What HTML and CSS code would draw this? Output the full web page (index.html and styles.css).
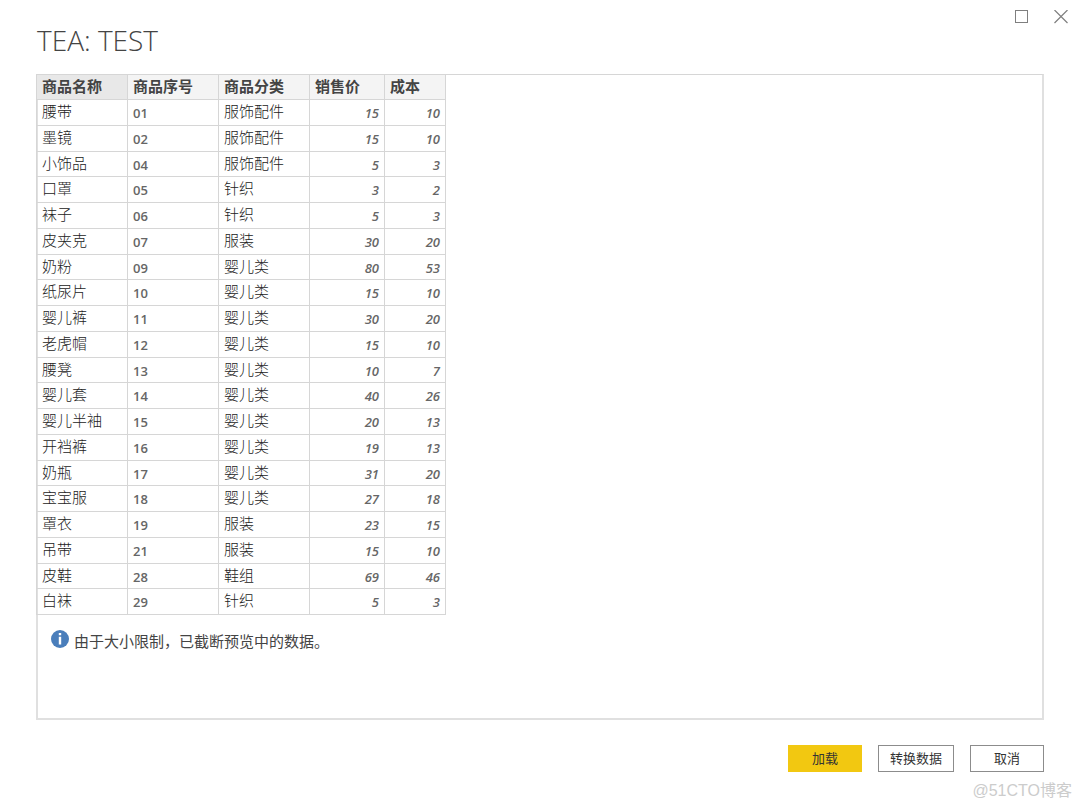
FILE: index.html
```html
<!DOCTYPE html>
<html lang="zh-CN">
<head>
<meta charset="utf-8">
<meta name="viewport" content="width=device-width, initial-scale=1">
<title>TEA: TEST</title>
<link rel="stylesheet" href="styles.css">
</head>
<body>
<main class="dialog">
  <div class="window-controls">
    <button class="window-button" type="button" aria-label="最大化">
      <svg width="14" height="14" viewBox="0 0 14 14" fill="none" stroke="#7f7f7f"><rect x="1.5" y="0.5" width="12" height="12"/></svg>
    </button>
    <button class="window-button" type="button" aria-label="关闭">
      <svg width="14" height="14" viewBox="0 0 14 14" fill="none" stroke="#7f7f7f" stroke-width="1.2"><path d="M0.5 0L13.500 13M13.500 0L0.500 13"/></svg>
    </button>
  </div>
  <h1 class="title">TEA: TEST</h1>
  <section class="preview">
    <table class="data">
      <colgroup><col class="col-name"><col class="col-code"><col class="col-kind"><col class="col-price"><col class="col-cost"></colgroup>
      <thead>
        <tr><th scope="col" class="selected">商品名称</th><th scope="col">商品序号</th><th scope="col">商品分类</th><th scope="col">销售价</th><th scope="col">成本</th></tr>
      </thead>
      <tbody>
        <tr><td>腰带</td><td class="code">01</td><td>服饰配件</td><td class="num">15</td><td class="num">10</td></tr>
        <tr><td>墨镜</td><td class="code">02</td><td>服饰配件</td><td class="num">15</td><td class="num">10</td></tr>
        <tr><td>小饰品</td><td class="code">04</td><td>服饰配件</td><td class="num">5</td><td class="num">3</td></tr>
        <tr><td>口罩</td><td class="code">05</td><td>针织</td><td class="num">3</td><td class="num">2</td></tr>
        <tr><td>袜子</td><td class="code">06</td><td>针织</td><td class="num">5</td><td class="num">3</td></tr>
        <tr><td>皮夹克</td><td class="code">07</td><td>服装</td><td class="num">30</td><td class="num">20</td></tr>
        <tr><td>奶粉</td><td class="code">09</td><td>婴儿类</td><td class="num">80</td><td class="num">53</td></tr>
        <tr><td>纸尿片</td><td class="code">10</td><td>婴儿类</td><td class="num">15</td><td class="num">10</td></tr>
        <tr><td>婴儿裤</td><td class="code">11</td><td>婴儿类</td><td class="num">30</td><td class="num">20</td></tr>
        <tr><td>老虎帽</td><td class="code">12</td><td>婴儿类</td><td class="num">15</td><td class="num">10</td></tr>
        <tr><td>腰凳</td><td class="code">13</td><td>婴儿类</td><td class="num">10</td><td class="num">7</td></tr>
        <tr><td>婴儿套</td><td class="code">14</td><td>婴儿类</td><td class="num">40</td><td class="num">26</td></tr>
        <tr><td>婴儿半袖</td><td class="code">15</td><td>婴儿类</td><td class="num">20</td><td class="num">13</td></tr>
        <tr><td>开裆裤</td><td class="code">16</td><td>婴儿类</td><td class="num">19</td><td class="num">13</td></tr>
        <tr><td>奶瓶</td><td class="code">17</td><td>婴儿类</td><td class="num">31</td><td class="num">20</td></tr>
        <tr><td>宝宝服</td><td class="code">18</td><td>婴儿类</td><td class="num">27</td><td class="num">18</td></tr>
        <tr><td>罩衣</td><td class="code">19</td><td>服装</td><td class="num">23</td><td class="num">15</td></tr>
        <tr><td>吊带</td><td class="code">21</td><td>服装</td><td class="num">15</td><td class="num">10</td></tr>
        <tr><td>皮鞋</td><td class="code">28</td><td>鞋组</td><td class="num">69</td><td class="num">46</td></tr>
        <tr><td>白袜</td><td class="code">29</td><td>针织</td><td class="num">5</td><td class="num">3</td></tr>
      </tbody>
    </table>
    <p class="notice">
      <svg width="18" height="18" viewBox="0 0 18 18" aria-hidden="true"><circle cx="9" cy="9" r="9" fill="#4a7ebb"/><path d="M7.800 3h2.400v2.200H7.800zM7.800 6.700h2.400V14.500H7.800z" fill="#fff"/></svg>
      <span>由于大小限制，已截断预览中的数据。</span>
    </p>
  </section>
  <footer class="actions">
    <button class="button primary" type="button">加载</button>
    <button class="button" type="button">转换数据</button>
    <button class="button" type="button">取消</button>
  </footer>
  <div class="watermark">@51CTO博客</div>
</main>
</body>
</html>
```
FILE: styles.css
```css
* {
  box-sizing: border-box;
}

body {
  margin: 0;
  background: #fff;
  color: #444;
  font-family: "Open Sans", "Noto Sans CJK SC", sans-serif;
  font-size: 15px;
}

.dialog {
  display: flex;
  flex-direction: column;
  min-height: 100vh;
  padding: 0 36px;
}

.window-controls {
  display: flex;
  justify-content: flex-end;
  gap: 26px;
  height: 24px;
  padding-top: 10px;
  margin-right: -32px;
  padding-right: 8px;
}

.window-button {
  display: flex;
  width: 14px;
  height: 14px;
  padding: 0;
  border: 0;
  background: none;
}

.title {
  margin: 0 0 17px;
  padding-left: 1px;
  color: #444;
  font-size: 28px;
  font-weight: 300;
  line-height: 33px;
}

.preview {
  flex: 1;
  border: 2px solid #e0e0e0;
  border-top: 1px solid #d6d6d6;
}

.data {
  width: 409px;
  margin: -1px 0 0 -2px;
  border-collapse: collapse;
  table-layout: fixed;
}

.col-name,
.col-code,
.col-kind {
  width: 91px;
}

.col-price {
  width: 75px;
}

.col-cost {
  width: 61px;
}

.data th,
.data td {
  height: 26px;
  padding: 0 5px;
  border: 1px solid #d6d6d6;
  line-height: 20px;
  text-align: left;
  white-space: nowrap;
}

.data th {
  height: 25px;
  padding-bottom: 3px;
  background: #f4f4f4;
  font-weight: 700;
}

.data th.selected {
  background: #e8e8e8;
}

.data td {
  padding-bottom: 3px;
  font-weight: 300;
  color: #222;
}

.data tr:nth-child(4n + 3) td {
  height: 25px;
}

.data td.code,
.data td.num {
  padding-top: 1px;
  padding-bottom: 0;
  color: #666;
  font-size: 13px;
  font-weight: 600;
}

.data td.num {
  font-style: italic;
  text-align: right;
}

.notice {
  display: flex;
  gap: 5px;
  margin: 15px 0 0 13px;
  line-height: 22px;
}

.actions {
  display: flex;
  justify-content: flex-end;
  gap: 16px;
  margin-top: 25px;
}

.button {
  min-width: 74px;
  height: 27px;
  padding: 0 11px 2px;
  border: 1px solid #8c8c8c;
  background: #fff;
  color: #333;
  font: inherit;
  font-size: 13px;
  line-height: 22px;
}

.button.primary {
  border-color: #f2c811;
  background: #f2c811;
}

.watermark {
  margin: 8px -28px 7px 0;
  color: #ccc;
  font-family: "Liberation Sans", "Noto Sans CJK SC", sans-serif;
  font-size: 16px;
  line-height: 22px;
  text-align: right;
}
```
